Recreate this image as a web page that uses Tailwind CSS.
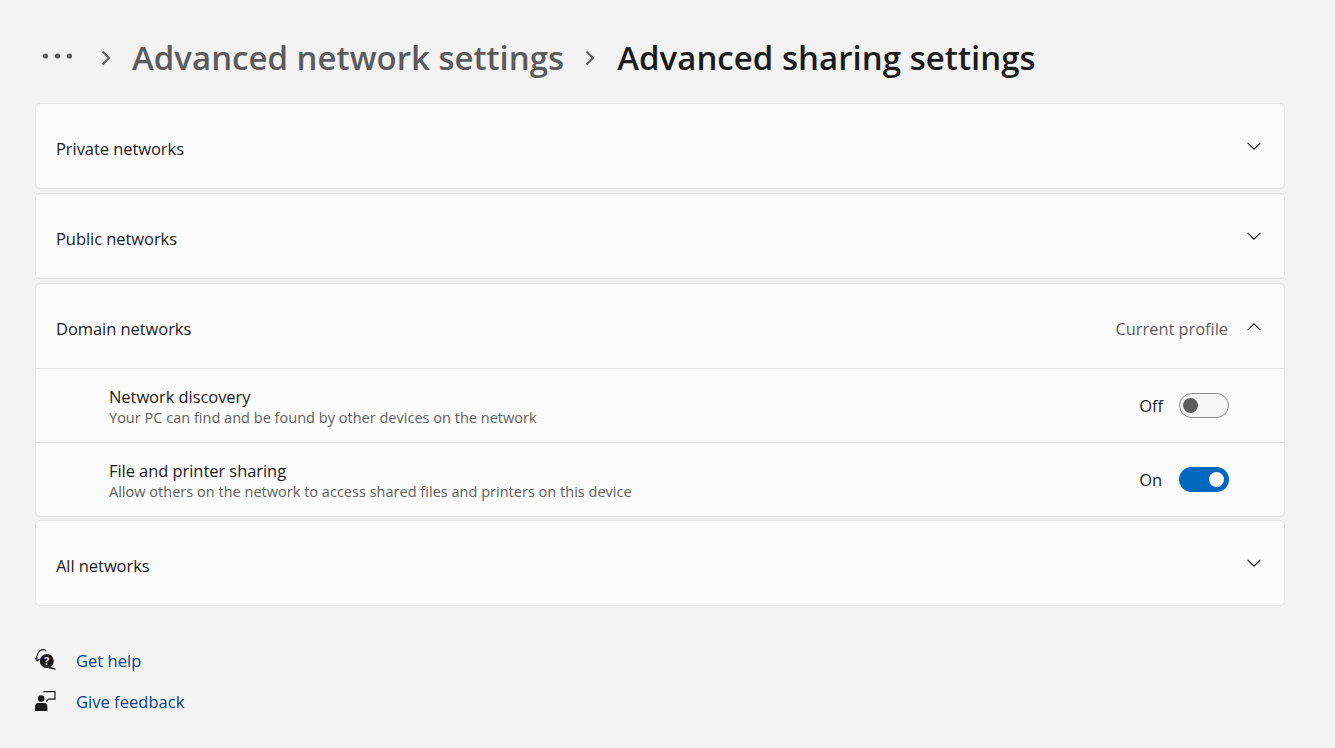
<!DOCTYPE html>
<html lang="en">
<head>
  <meta charset="UTF-8">
  <title>Advanced sharing settings</title>
  <script src="https://cdn.jsdelivr.net/npm/@tailwindcss/browser@4"></script>
</head>
<body class="bg-[#f3f3f3] text-[#1b1b1b] font-['Open_Sans',sans-serif] w-[1335px] h-[748px] overflow-hidden">

  <!-- breadcrumb -->
  <div class="h-[103px] pl-[43px] pt-[36px] flex items-start">
    <div class="h-[44px] flex items-center">
      <svg width="29" height="6" viewBox="0 0 29 6" class="fill-[#5c5c5c] mt-[-4px]"><circle cx="2.5" cy="3" r="2.6"/><circle cx="14.5" cy="3" r="2.6"/><circle cx="26.5" cy="3" r="2.6"/></svg>
      <svg width="10" height="16" viewBox="0 0 10 16" class="ml-[29px] fill-none stroke-[#5c5c5c] stroke-[2]"><path d="M1.5 1.5 8 8l-6.5 6.5"/></svg>
      <span class="ml-[21px] text-[33px] font-semibold text-[#5c5c5c] whitespace-nowrap">Advanced network settings</span>
      <svg width="10" height="16" viewBox="0 0 10 16" class="ml-[21px] fill-none stroke-[#5c5c5c] stroke-[2]"><path d="M1.5 1.5 8 8l-6.5 6.5"/></svg>
      <span class="ml-[22px] text-[33px] font-semibold text-[#1b1b1b] tracking-[0.03px] whitespace-nowrap">Advanced sharing settings</span>
    </div>
  </div>

  <div class="ml-[35px] w-[1250px] flex flex-col">
    <!-- Private -->
    <div class="h-[86px] bg-[#fbfbfb] border border-[#e5e5e5] rounded-[5px] pl-[20px] pr-[23px] flex items-center justify-between">
      <span class="text-[16.5px] tracking-[-0.06px] mt-[6px]">Private networks</span>
      <svg width="14" height="8" viewBox="0 0 14 8" class="fill-none stroke-[#1b1b1b] stroke-[1.2]"><path d="M.6.9 7 7.1 13.4.9"/></svg>
    </div>
    <!-- Public -->
    <div class="mt-[4px] h-[86px] bg-[#fbfbfb] border border-[#e5e5e5] rounded-[5px] pl-[20px] pr-[23px] flex items-center justify-between">
      <span class="text-[16.5px] tracking-[-0.06px] mt-[6px]">Public networks</span>
      <svg width="14" height="8" viewBox="0 0 14 8" class="fill-none stroke-[#1b1b1b] stroke-[1.2]"><path d="M.6.9 7 7.1 13.4.9"/></svg>
    </div>
    <!-- Domain -->
    <div class="mt-[4px] h-[234px] bg-[#fbfbfb] border border-[#e5e5e5] rounded-[5px] flex flex-col">
      <div class="h-[84px] shrink-0 pl-[20px] pr-[23px] flex items-center justify-between">
        <span class="text-[16.5px] tracking-[-0.06px] mt-[6px]">Domain networks</span>
        <div class="flex items-center">
          <span class="text-[16.5px] tracking-[-0.06px] text-[#5f5f5f] mt-[6px]">Current profile</span>
          <svg width="14" height="8" viewBox="0 0 14 8" class="ml-[19px] fill-none stroke-[#1b1b1b] stroke-[1.2] mt-[2px]"><path d="M.6 7.1 7 .9l6.4 6.2"/></svg>
        </div>
      </div>
      <div class="h-[74px] border-t border-[#e5e5e5] pl-[73px] pr-[55px] flex items-center justify-between">
        <div class="flex flex-col">
          <span class="text-[16.5px] leading-[20px] tracking-[-0.06px] mt-[4px]">Network discovery</span>
          <span class="text-[14.5px] leading-[20px] tracking-[0.02px] text-[#5f5f5f] mt-[1px]">Your PC can find and be found by other devices on the network</span>
        </div>
        <div class="flex items-center">
          <span class="text-[16.5px] tracking-[-0.06px] mt-[2px]">Off</span>
          <span class="ml-[16px] w-[50px] h-[25px] rounded-full border border-[#8a8a8a] bg-[#f6f6f6] flex items-center pl-[3px]">
            <span class="w-[15px] h-[15px] rounded-full bg-[#5d5d5d]"></span>
          </span>
        </div>
      </div>
      <div class="h-[74px] border-t border-[#e5e5e5] pl-[73px] pr-[55px] flex items-center justify-between">
        <div class="flex flex-col">
          <span class="text-[16.5px] leading-[20px] tracking-[-0.06px] mt-[4px]">File and printer sharing</span>
          <span class="text-[14.5px] leading-[20px] tracking-[0.02px] text-[#5f5f5f] mt-[1px]">Allow others on the network to access shared files and printers on this device</span>
        </div>
        <div class="flex items-center">
          <span class="text-[16.5px] tracking-[-0.06px] mt-[2px]">On</span>
          <span class="ml-[17px] w-[50px] h-[25px] rounded-full bg-[#0067c0] flex items-center justify-end pr-[5px]">
            <span class="w-[15px] h-[15px] rounded-full bg-white"></span>
          </span>
        </div>
      </div>
    </div>
    <!-- All -->
    <div class="mt-[3px] h-[86px] bg-[#fbfbfb] border border-[#e5e5e5] rounded-[5px] pl-[20px] pr-[23px] flex items-center justify-between">
      <span class="text-[16.5px] tracking-[-0.06px] mt-[6px]">All networks</span>
      <svg width="14" height="8" viewBox="0 0 14 8" class="fill-none stroke-[#1b1b1b] stroke-[1.2]"><path d="M.6.9 7 7.1 13.4.9"/></svg>
    </div>
  </div>

  <!-- links -->
  <div class="ml-[35px] mt-[44px] flex flex-col gap-[19px]">
    <div class="flex items-center h-[22px]">
      <svg width="21" height="22" viewBox="0 0 21 22" class="shrink-0 mt-[-4px]">
        <path d="M2.2 12.5C.6 7.5 3.8 1.6 8.3 1.6c1.3 0 2.4.5 3 1.6" fill="none" stroke="#1b1b1b" stroke-width="1.2"/>
        <path d="M.3 10.2 2.4 13l2.2-2" fill="none" stroke="#1b1b1b" stroke-width="1.1"/>
        <circle cx="11.8" cy="13" r="7" fill="#1b1b1b"/>
        <path d="M15 19 20.5 21.3 14 20z" fill="#1b1b1b" stroke="#1b1b1b" stroke-width=".8"/>
        <text x="11.8" y="17" text-anchor="middle" font-size="10.5" font-weight="700" fill="#f3f3f3" font-family="Open Sans">?</text>
      </svg>
      <a class="ml-[20px] text-[16.5px] tracking-[0.03px] text-[#003e92]">Get help</a>
    </div>
    <div class="flex items-center h-[22px]">
      <svg width="21" height="21" viewBox="0 0 21 21" class="shrink-0 mt-[-4px]">
        <path d="M8.5 1.6H20v7.6h-6.5l-2.4 2.4" fill="none" stroke="#1b1b1b" stroke-width="1.2"/>
        <circle cx="6.2" cy="8.6" r="3.3" fill="#1b1b1b"/>
        <path d="M0 21v-4.5c0-2 1.2-3.6 3-3.6h6.4c1.8 0 3 1.6 3 3.6V21z" fill="#1b1b1b"/>
      </svg>
      <a class="ml-[20px] text-[16.5px] tracking-[0.03px] text-[#003e92]">Give feedback</a>
    </div>
  </div>
</body>
</html>
